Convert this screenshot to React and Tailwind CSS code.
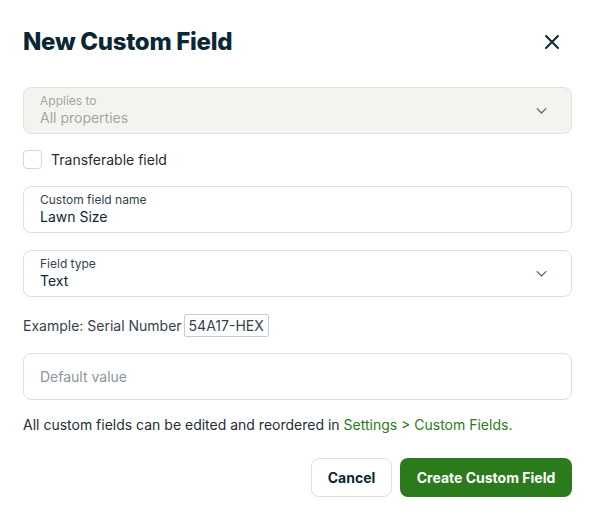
import React from "react";

function Chevron() {
  return (
    <svg width="15" height="15" viewBox="0 0 24 24" fill="none" stroke="#5b6b76" strokeWidth="2.2" strokeLinecap="round" strokeLinejoin="round">
      <path d="M5 9l7 7 7-7" />
    </svg>
  );
}

export default function App() {
  return (
    <div className="w-[595px] h-[521px] bg-white px-[23px] text-[#1e2d36]" style={{ fontFamily: "Inter, 'Liberation Sans', sans-serif" }}>
      <div className="flex items-center justify-between pt-[28px] h-[56px]">
        <h1 className="text-[24px] leading-[28px] font-extrabold text-[#0b2735] tracking-[-0.3px]">New Custom Field</h1>
        <button className="mr-[12px] text-[#0b2735]">
          <svg width="16" height="16" viewBox="0 0 16 16" fill="none" stroke="currentColor" strokeWidth="2" strokeLinecap="round">
            <path d="M2 2l12 12M14 2L2 14" />
          </svg>
        </button>
      </div>

      <div className="mt-[31px] h-[47px] rounded-[8px] border border-[#e2e2dc] bg-[#f4f3ef] flex items-center justify-between pl-[16px] pr-[22px]">
        <div className="flex flex-col -mt-[2px]">
          <span className="text-[12px] leading-[15px] text-[#a3a6a6]">Applies to</span>
          <span className="text-[14px] leading-[19px] text-[#a3a6a6]">All properties</span>
        </div>
        <Chevron />
      </div>

      <div className="mt-[16px] flex items-center h-[19px]">
        <div className="w-[19px] h-[19px] rounded-[4px] border border-[#cfd8dc] bg-white"></div>
        <span className="ml-[9px] text-[14px] text-[#1e2d36]">Transferable field</span>
      </div>

      <div className="mt-[17px] h-[47px] rounded-[8px] border border-[#dbe0e3] flex flex-col justify-center pl-[16px]">
        <span className="text-[12px] leading-[15px] text-[#33434d] -mt-[2px]">Custom field name</span>
        <span className="text-[14px] leading-[19px] text-[#0b2735]">Lawn Size</span>
      </div>

      <div className="mt-[17px] h-[47px] rounded-[8px] border border-[#dbe0e3] flex items-center justify-between pl-[16px] pr-[22px]">
        <div className="flex flex-col -mt-[2px]">
          <span className="text-[12px] leading-[15px] text-[#33434d]">Field type</span>
          <span className="text-[14px] leading-[19px] text-[#0b2735]">Text</span>
        </div>
        <Chevron />
      </div>

      <div className="mt-[17px] flex items-center h-[23px]">
        <span className="text-[14px] text-[#33434d]">Example: Serial Number</span>
        <span className="ml-[2px] h-[23px] px-[4px] border border-[#c9cdd0] rounded-[2px] text-[14px] leading-[21px] text-[#33434d]">54A17-HEX</span>
      </div>

      <div className="mt-[16px] h-[47px] rounded-[8px] border border-[#dbe0e3] flex items-center pl-[16px]">
        <span className="text-[14px] text-[#8a969d]">Default value</span>
      </div>

      <p className="mt-[15px] text-[14px] leading-[20px] text-[#1e2d36]">
        All custom fields can be edited and reordered in <span className="text-[#2b7a1c]">Settings &gt; Custom Fields.</span>
      </p>

      <div className="mt-[23px] flex justify-end gap-[8px]">
        <button className="h-[39px] w-[81px] rounded-[8px] border border-[#dbe0e3] bg-white text-[14px] font-bold text-[#0b2735]">Cancel</button>
        <button className="h-[39px] w-[172px] rounded-[8px] bg-[#2b7a1c] text-[14px] font-bold text-white">Create Custom Field</button>
      </div>
    </div>
  );
}
